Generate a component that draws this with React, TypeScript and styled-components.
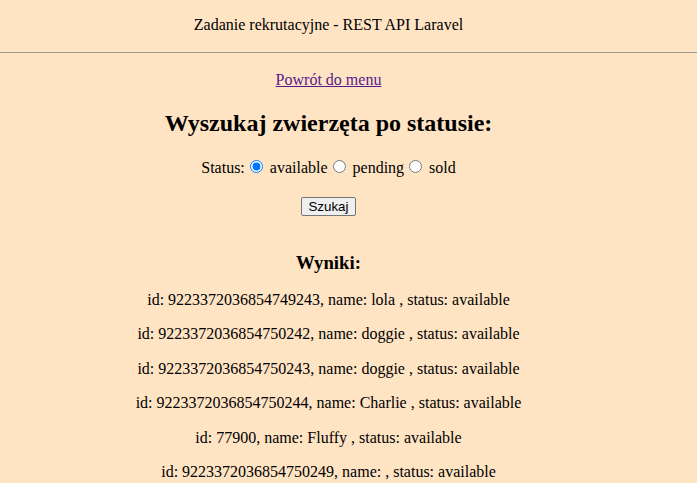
import React from "react";
import styled, { createGlobalStyle } from "styled-components";

type Pet = { id: string; name: string; status: string };

const pets: Pet[] = [
  { id: "9223372036854749243", name: "lola", status: "available" },
  { id: "9223372036854750242", name: "doggie", status: "available" },
  { id: "9223372036854750243", name: "doggie", status: "available" },
  { id: "9223372036854750244", name: "Charlie", status: "available" },
  { id: "77900", name: "Fluffy", status: "available" },
  { id: "9223372036854750249", name: "", status: "available" },
];

const statuses = ["available", "pending", "sold"];

const App: React.FC = () => {
  return (
    <>
      <GlobalStyle />
      <Header>
        <HeaderInner>Zadanie rekrutacyjne - REST API Laravel</HeaderInner>
      </Header>
      <Main>
        <BackLink>
          <MenuLink href="#">Powrót do menu</MenuLink>
        </BackLink>
        <Title>Wyszukaj zwierzęta po statusie:</Title>
        <Form onSubmit={(e) => e.preventDefault()}>
          <StatusRow>
            Status:
            {statuses.map((s) => (
              <React.Fragment key={s}>
                <Radio
                  type="radio"
                  id={s}
                  name="status"
                  value={s}
                  defaultChecked={s === "available"}
                />{" "}
                <label htmlFor={s}>{s}</label>
              </React.Fragment>
            ))}
          </StatusRow>
          <SearchButton type="submit">Szukaj</SearchButton>
        </Form>
        <ResultsTitle>Wyniki:</ResultsTitle>
        {pets.map((p, i) => (
          <ResultRow key={i}>
            id: {p.id}, name: {p.name} , status: {p.status}
          </ResultRow>
        ))}
      </Main>
    </>
  );
};

const GlobalStyle = createGlobalStyle`
  html, body {
    margin: 0;
    background-color: #ffe4c4;
  }
  body {
    font-family: "Liberation Serif", "Times New Roman", serif;
    font-size: 16px;
    color: #000;
    overflow: hidden;
  }
`;

const Header = styled.header`
  border-bottom: 1px solid #9a9a9a;
  padding: 16px 0 18px;
`;

const HeaderInner = styled.div`
  width: 657px;
  text-align: center;
`;

const Main = styled.main`
  width: 657px;
  text-align: center;
`;

const BackLink = styled.p`
  margin: 18px 0 0;
`;

const MenuLink = styled.a`
  color: #551a8b;
  text-decoration: underline;
`;

const Title = styled.h2`
  font-size: 24px;
  font-weight: bold;
  margin: 21px 0 20px;
`;

const Form = styled.form`
  display: flex;
  flex-direction: column;
  align-items: center;
  gap: 20px;
`;

const StatusRow = styled.div``;

const Radio = styled.input`
  width: 13px;
  height: 13px;
  margin: 3px 3px 0 5px;
`;

const SearchButton = styled.button`
  font-family: "Liberation Sans", Arial, sans-serif;
  font-size: 13.33px;
  padding: 1px 6px;
  border: 1px solid #767676;
  border-radius: 2px;
  background: #efefef;
  color: #000;
`;

const ResultsTitle = styled.h3`
  font-size: 18.72px;
  font-weight: bold;
  margin: 36px 0 17px;
`;

const ResultRow = styled.p`
  margin: 0 0 16px;
  line-height: 1.15;
`;

export default App;
